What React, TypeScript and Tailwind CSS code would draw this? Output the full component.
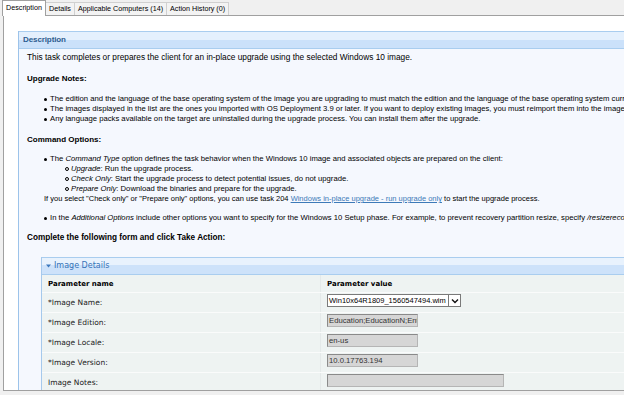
import * as React from 'react';

const body = "font-['Liberation_Sans',Arial,sans-serif]";
const verdana = "font-['DejaVu_Sans',Verdana,sans-serif]";

function Tabs() {
  const tabs = ['Description', 'Details', 'Applicable Computers (14)', 'Action History (0)'];
  return (
    <div className="flex h-[16px] items-end pl-[2px]">
      {tabs.map((t, i) =>
        i === 0 ? (
          <div
            key={t}
            className="relative z-10 flex h-[16px] items-center whitespace-nowrap border border-b-0 border-[#a0a0a0] bg-white px-[3px] text-[7.2px] text-black"
          >
            {t}
          </div>
        ) : (
          <div
            key={t}
            className="-ml-px flex h-[14px] items-center whitespace-nowrap border border-b-0 border-[#d0d0d0] bg-[#f3f3f3] px-[3px] text-[7.2px] text-black"
          >
            {t}
          </div>
        ),
      )}
    </div>
  );
}

function Dot() {
  return <span className="mt-[4px] h-[3px] w-[3px] shrink-0 rounded-full bg-black" />;
}

function Ring() {
  return <span className="mt-[3px] h-[4px] w-[4px] shrink-0 rounded-full border border-black" />;
}

function Bullet({ children }: { children: React.ReactNode }) {
  return (
    <div className="flex gap-[3px] whitespace-nowrap pl-[17px] text-[7.7px]">
      <Dot />
      <div>{children}</div>
    </div>
  );
}

function Sub({ children }: { children: React.ReactNode }) {
  return (
    <div className="flex gap-[2px] whitespace-nowrap pl-[38px] text-[7.7px]">
      <Ring />
      <div>{children}</div>
    </div>
  );
}

function ReadOnly({ value, w = 'w-[91px]' }: { value: string; w?: string }) {
  return (
    <div
      className={`h-[13px] ${w} overflow-hidden whitespace-nowrap border border-[#b5b5b5] border-l-[#8a8a8a] border-t-[#8a8a8a] bg-[#d6d6d6] px-[1px] text-[7.7px] leading-[11px] text-[#333]`}
    >
      {value}
    </div>
  );
}

function Row({ label, children }: { label: string; children: React.ReactNode }) {
  return (
    <div className="flex h-[20px] border-t border-[#fafbfb]">
      <div className={`flex w-[278px] items-center pl-[6px] text-[7.5px] text-[#222] ${verdana}`}>{label}</div>
      <div className="flex flex-1 items-start border-l border-[#e4e9e9] pl-[6px] pt-[1px]">{children}</div>
    </div>
  );
}

function ImageDetails() {
  return (
    <div className="ml-[14px] border-l border-[#a6c9ec]">
      <div className="flex h-[18px] items-center gap-[3px] border-t border-b border-[#a9cdef] bg-[linear-gradient(#e8f2fd_45%,#cde2fa_45%)] pl-[4px]">
        <svg width="5" height="4" viewBox="0 0 5 4">
          <path d="M0 0.5h5L2.5 3.5z" fill="#3b78bd" />
        </svg>
        <span className={`text-[8px] text-[#3572b8] ${verdana}`}>Image Details</span>
      </div>
      <div className="bg-[#eef3f2]">
        <div className={`flex h-[17px] items-center text-[7px] font-bold text-black ${verdana}`}>
          <div className="w-[278px] pl-[6px]">Parameter name</div>
          <div className="flex h-full items-center border-l border-[#e4e9e9] pl-[6px]">Parameter value</div>
        </div>
        <Row label="*Image Name:">
          <div className="flex h-[13px] w-[134px] border border-[#7a7a7a] bg-white">
            <div className="flex-1 overflow-hidden whitespace-nowrap px-[1px] text-[7.5px] leading-[11px] text-black">
              Win10x64R1809_1560547494.wim
            </div>
            <div className="flex w-[12px] items-center justify-center border-l border-[#7a7a7a] bg-white">
              <svg width="8" height="6" viewBox="0 0 8 6">
                <path d="M1 1.5l3 3 3-3" stroke="#111" strokeWidth="1.4" fill="none" />
              </svg>
            </div>
          </div>
        </Row>
        <Row label="*Image Edition:">
          <ReadOnly value="Education;EducationN;Enterprise" />
        </Row>
        <Row label="*Image Locale:">
          <ReadOnly value="en-us" />
        </Row>
        <Row label="*Image Version:">
          <ReadOnly value="10.0.17763.194" />
        </Row>
        <Row label="Image Notes:">
          <ReadOnly value="" w="w-[177px]" />
        </Row>
      </div>
    </div>
  );
}

export default function App() {
  return (
    <div className={`flex h-[395px] w-[624px] flex-col overflow-hidden bg-[#f0f0f0] ${body}`}>
      <Tabs />
      <div className="-mt-px ml-[3px] h-[376px] overflow-hidden border-y border-l border-[#a0a0a0] bg-white pl-[14px] pt-[15px]">
        <div className="h-full border-l border-[#9cc3ea]">
          <div className="flex h-[18px] items-center border-y border-[#a9cdef] bg-[linear-gradient(#e4f0fd_50%,#cbe1fa_50%)] pl-[4px]">
            <span className="text-[8px] font-bold tracking-[-0.1px] text-[#2d5c8f]">Description</span>
          </div>
          <div className="h-full bg-[#f5f8fe] pl-[8px] pt-[3px] text-[8px] leading-[10px] text-black">
            <div className="whitespace-nowrap text-[8.3px]">
              This task completes or prepares the client for an in-place upgrade using the selected Windows 10 image.
            </div>
            <div className="mt-[12px] font-bold">Upgrade Notes:</div>
            <div className="mt-[10px]">
              <Bullet>
                The edition and the language of the base operating system of the image you are upgrading to must match the edition and the language of the base operating system currently installed on the client.
              </Bullet>
              <Bullet>
                The images displayed in the list are the ones you imported with OS Deployment 3.9 or later. If you want to deploy existing images, you must reimport them into the image library.
              </Bullet>
              <Bullet>
                Any language packs available on the target are uninstalled during the upgrade process. You can install them after the upgrade.
              </Bullet>
            </div>
            <div className="mt-[11px] font-bold">Command Options:</div>
            <div className="mt-[9px]">
              <Bullet>
                The <i>Command Type</i> option defines the task behavior when the Windows 10 image and associated objects are prepared on the client:
              </Bullet>
              <Sub>
                <i>Upgrade</i>: Run the upgrade process.
              </Sub>
              <Sub>
                <i>Check Only</i>: Start the upgrade process to detect potential issues, do not upgrade.
              </Sub>
              <Sub>
                <i>Prepare Only</i>: Download the binaries and prepare for the upgrade.
              </Sub>
              <div className="whitespace-nowrap pl-[17px] text-[7.5px]">
                If you select "Check only" or "Prepare only" options, you can use task 204{' '}
                <span className="text-[#3d7ab8] underline">Windows in-place upgrade - run upgrade only</span> to start the upgrade process.
              </div>
            </div>
            <div className="mt-[9px]">
              <Bullet>
                In the <i>Additional Options</i> include other options you want to specify for the Windows 10 Setup phase. For example, to prevent recovery partition resize, specify <i>/resizerecoverypartition disable</i>.
              </Bullet>
            </div>
            <div className="mt-[10px] whitespace-nowrap text-[8.2px] font-bold">Complete the following form and click Take Action:</div>
            <div className="mt-[14px]">
              <ImageDetails />
            </div>
          </div>
        </div>
      </div>
    </div>
  );
}
